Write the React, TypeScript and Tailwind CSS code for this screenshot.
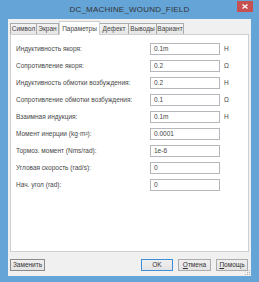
import React from 'react'

const TABS = [
  { label: 'Символ', w: 'w-[27px]' },
  { label: 'Экран', w: 'w-[23px]' },
  { label: 'Параметры', w: 'w-[41px]', active: true },
  { label: 'Дефект', w: 'w-[30px]' },
  { label: 'Выводы', w: 'w-[29px]' },
  { label: 'Вариант', w: 'w-[28px]' },
]

const ROWS: [string, string, string][] = [
  ['Индуктивность якоря:', '0.1m', 'H'],
  ['Сопротивление якоря:', '0.2', 'Ω'],
  ['Индуктивность обмотки возбуждения:', '0.2', 'H'],
  ['Сопротивление обмотки возбуждения:', '0.1', 'Ω'],
  ['Взаимная индукция:', '0.1m', 'H'],
  ['Момент инерции (kg·m²):', '0.0001', ''],
  ['Тормоз. момент (Nms/rad):', '1e-6', ''],
  ['Угловая скорость (rad/s):', '0', ''],
  ['Нач. угол (rad):', '0', ''],
]

const btnCls =
  'h-[12px] flex items-center justify-center border bg-gradient-to-b from-[#f0f0f0] to-[#e3e3e3] text-[6.5px] text-[#333]'

const App: React.FC = () => {
  return (
    <div className="w-[259px] h-[282px] bg-[#64a4d6] flex flex-col font-['Liberation_Sans',Arial,sans-serif]">
      {/* Title bar */}
      <div className="h-[19px] flex items-start">
        <div className="flex-1 h-full flex items-center justify-center pl-[22px] text-[8px] text-[#333] tracking-[0.2px]">
          DC_MACHINE_WOUND_FIELD
        </div>
        <div className="w-[16px] h-[11px] mt-[1px] mr-[6px] bg-[#c75050] flex items-center justify-center">
          <svg width="6" height="5" viewBox="0 0 6 5">
            <path d="M0.5 0.5 L5.5 4.5 M5.5 0.5 L0.5 4.5" stroke="#fff" strokeWidth="1.3" />
          </svg>
        </div>
      </div>

      {/* Client area */}
      <div className="relative mx-[8px] mb-[6px] flex-1 bg-[#f0f0f0] flex flex-col px-[2px] pt-[2px]">
        {/* Tab bar */}
        <div className="h-[13px] flex items-end">
          {TABS.map((t) =>
            t.active ? (
              <div
                key={t.label}
                className={`${t.w} h-[14px] -mb-px z-10 bg-white border border-b-0 border-[#d0d0d0] flex items-center justify-center text-[6.5px] text-[#444]`}
              >
                {t.label}
              </div>
            ) : (
              <div
                key={t.label}
                className={`${t.w} h-[11px] -ml-px first:ml-0 bg-gradient-to-b from-[#f3f3f3] to-[#e6e6e6] border border-b-0 border-[#acacac] flex items-center justify-center text-[6.5px] text-[#444]`}
              >
                {t.label}
              </div>
            )
          )}
        </div>

        {/* Tab panel */}
        <div className="h-[218px] bg-white border border-[#d0d0d0] pt-[8px] pl-[5px] flex flex-col gap-[5px]">
          {ROWS.map(([label, value, unit]) => (
            <div key={label} className="h-[12px] flex items-center">
              <div className="w-[134px] text-[6.5px] text-[#484848] whitespace-nowrap">{label}</div>
              <div className="w-[70px] h-[12px] border border-[#b5b7bd] bg-white flex items-center pl-[3px] text-[6.5px] text-[#444]">
                {value}
              </div>
              <div className="ml-[4px] text-[6.5px] text-[#484848]">{unit}</div>
            </div>
          ))}
        </div>

        {/* Buttons */}
        <div className="mt-[7px] flex items-center">
          <div className={`${btnCls} w-[35px] border-[#8a8a8a]`}>Заменить</div>
          <div className="flex-1" />
          <div className="flex gap-[5px] mr-px">
            <div className={`${btnCls} w-[32px] border-[#3c8ed6]`}>OK</div>
            <div className={`${btnCls} w-[33px] border-[#acacac]`}>
              <span><u>О</u>тмена</span>
            </div>
            <div className={`${btnCls} w-[32px] border-[#acacac]`}>
              <span><u>П</u>омощь</span>
            </div>
          </div>
        </div>

        {/* Resize grip */}
        <svg className="absolute right-0 bottom-0" width="6" height="6" viewBox="0 0 6 6">
          <rect x="4" y="0" width="1" height="1" fill="#b0b0b0" />
          <rect x="2" y="2" width="1" height="1" fill="#b0b0b0" />
          <rect x="4" y="2" width="1" height="1" fill="#b0b0b0" />
          <rect x="0" y="4" width="1" height="1" fill="#b0b0b0" />
          <rect x="2" y="4" width="1" height="1" fill="#b0b0b0" />
          <rect x="4" y="4" width="1" height="1" fill="#b0b0b0" />
        </svg>
      </div>
    </div>
  )
}

export default App
